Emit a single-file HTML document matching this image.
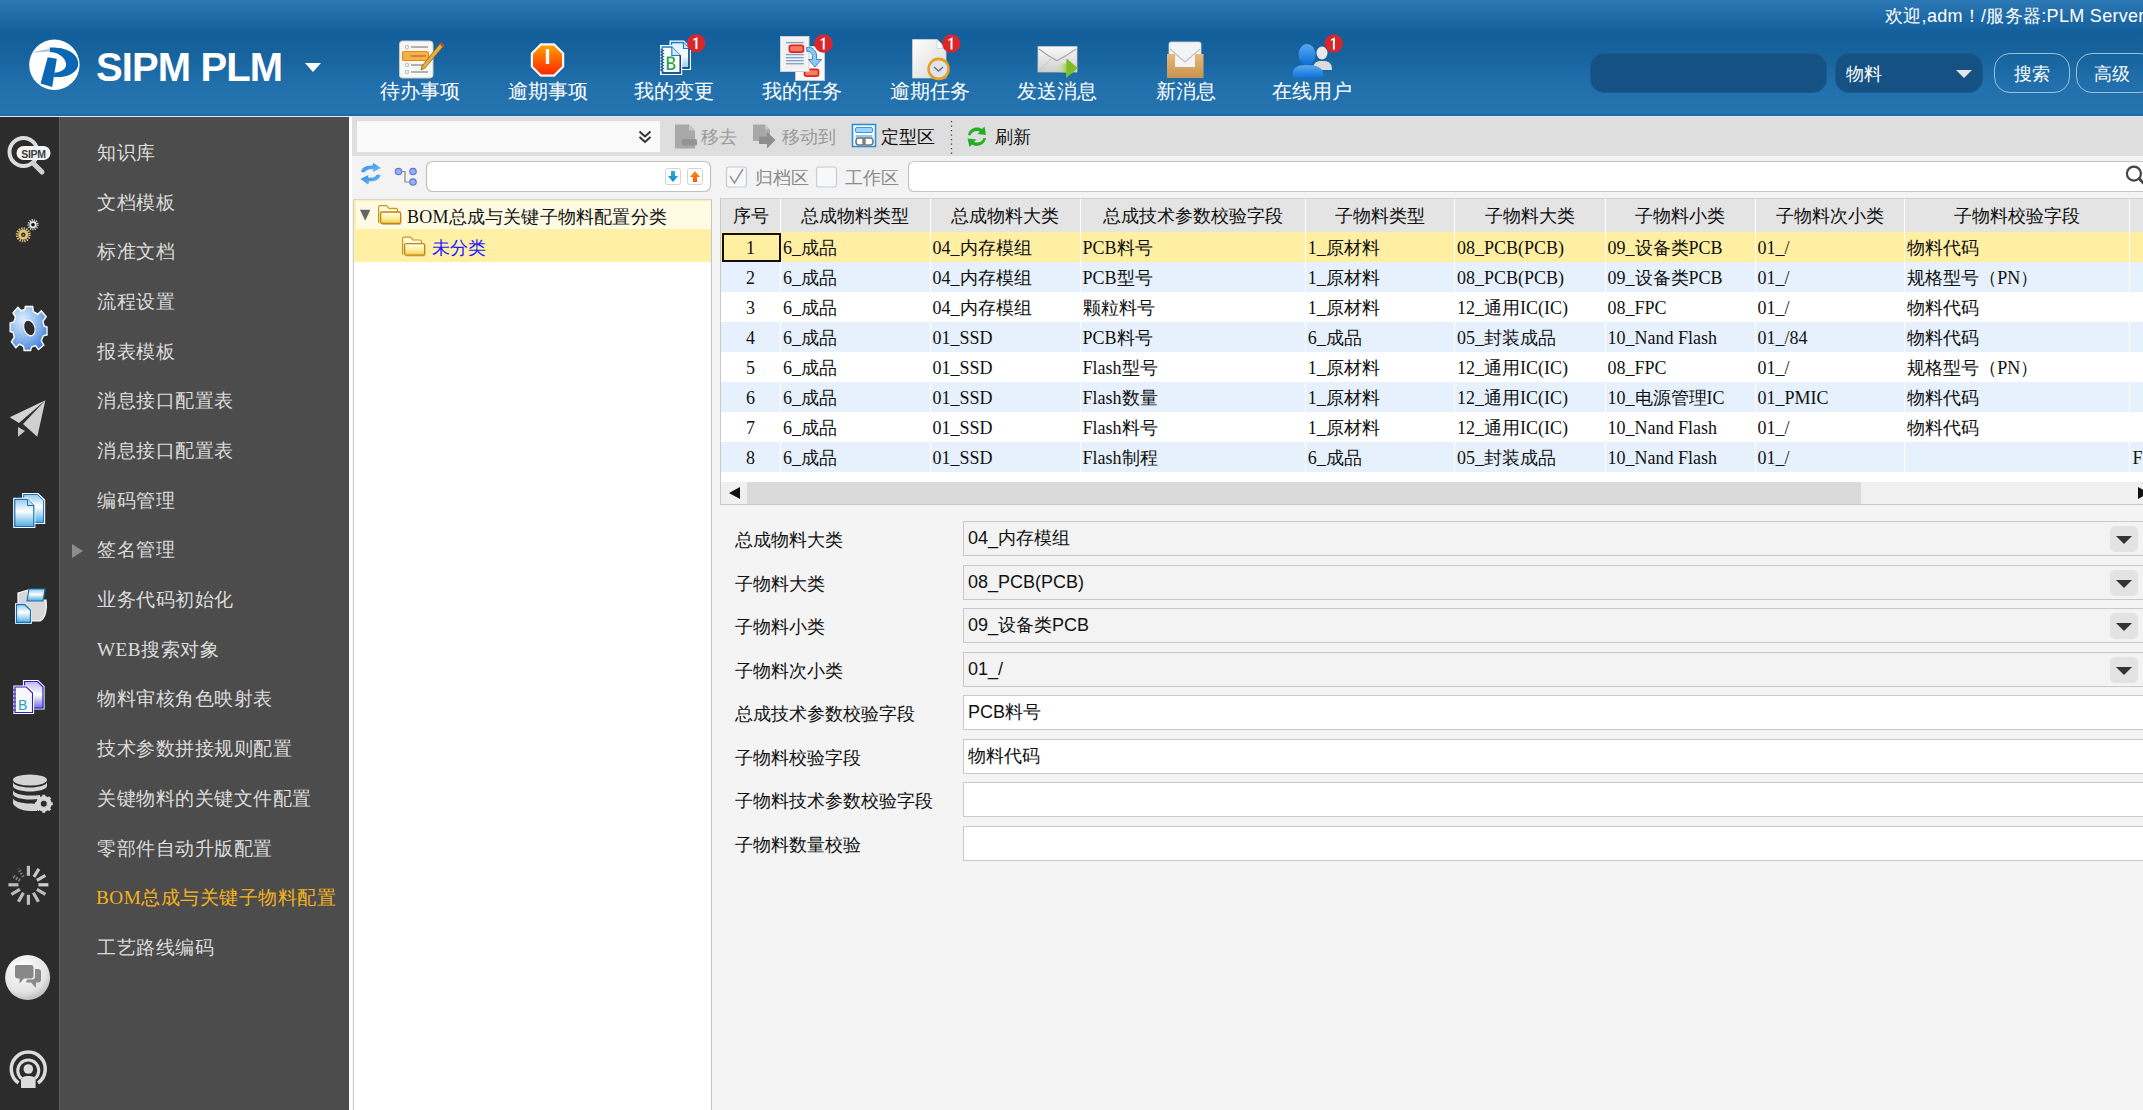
<!DOCTYPE html>
<html><head><meta charset="utf-8">
<style>
*{box-sizing:border-box;margin:0;padding:0}
html,body{width:2143px;height:1110px;overflow:hidden;background:#f4f4f4;font-family:"Liberation Sans",sans-serif}
.a{position:absolute}
#hdr{left:0;top:0;width:2143px;height:116px;background:linear-gradient(#2a78b4 0px,#1e6aa6 18px,#135f9b 33px,#16639e 55px,#2170ac 85px,#2574b0 113px,#1c6ba7 115px,#1c6ba7 116px)}
#hline{left:0;top:116px;width:2143px;height:1px;background:#e6e6e6}
.hl{top:80px;width:120px;text-align:center;color:#fff;font-size:19.5px;line-height:22px;white-space:nowrap;font-weight:300}
.tbt{top:125px;font-size:17.8px;line-height:24px;white-space:nowrap}
.nav{top:36px;width:110px;height:70px;text-align:center;color:#fff;font-size:19.5px}
.nav .lb{position:absolute;left:0;right:0;top:44px;line-height:22px;white-space:nowrap}
.nav svg{position:absolute;left:39px;top:4px}
#iconbar{left:0;top:117px;width:59px;height:993px;background:#2c2c2c}
#iconline{left:59px;top:117px;width:1px;height:993px;background:#5e5e5e}
#menu{left:60px;top:117px;width:289px;height:993px;background:#4c4c4c}
.mi{left:97px;color:#dcdcdc;font-size:19.2px;line-height:24px;white-space:nowrap;letter-spacing:0.5px}
.mi.sel{color:#f5b21e;left:96px}
#sep1{left:349px;top:117px;width:3px;height:993px;background:#fff}
#tb{left:352px;top:117px;width:1791px;height:39px;background:#dedede}
#row2{left:352px;top:156px;width:1791px;height:43px;background:#f3f3f3}
#tree{left:353px;top:199px;width:359px;height:911px;background:#fff;border-left:1px solid #cfcfcf;border-right:1px solid #c4c4c4;border-top:1px solid #d8d8d8}
#grid{left:720px;top:198px;width:1423px;height:307px;background:#fff;border-left:1px solid #c8c8c8;border-top:1px solid #d0d0d0;border-bottom:1px solid #c8c8c8}
.hc{top:0;height:33px;background:#e4e4e4;border-right:2px solid #fff;color:#111;font-size:17.6px;line-height:35px;text-align:center;white-space:nowrap;overflow:hidden}
.r{left:0;width:1423px;height:30px}
.c{top:0;height:30px;border-right:2px solid #fff;font-family:"Liberation Serif",serif;font-size:18px;line-height:32px;color:#111;white-space:nowrap;overflow:hidden;padding-left:2px}
.lbl{left:735px;font-size:18px;color:#111;line-height:22px;white-space:nowrap}
.fld{left:963px;width:1190px;height:35px;border:1px solid #c9c9c9;background:#f3f3f3;font-size:18px;line-height:33px;padding-left:4px;color:#111}
.fld.w{background:#fff}
.dd{position:absolute;left:1146px;top:4px;width:28px;height:26px;background:#e3e3e3;border-radius:5px}
.dd:after{content:"";position:absolute;left:6px;top:10px;border-left:8px solid transparent;border-right:8px solid transparent;border-top:8px solid #333}
</style></head><body>
<div id="hdr" class="a"></div>
<div id="hline" class="a"></div>
<!-- navicons -->
<svg class="a" style="left:0;top:0" width="1400" height="116" viewBox="0 0 1400 116">
<defs>
<linearGradient id="gOct" x1="0" y1="0" x2="0" y2="1"><stop offset="0" stop-color="#ffa000"/><stop offset="0.55" stop-color="#ff5a00"/><stop offset="1" stop-color="#ff2a00"/></linearGradient>
<linearGradient id="gPaper" x1="0" y1="0" x2="1" y2="1"><stop offset="0" stop-color="#ffffff"/><stop offset="1" stop-color="#d8d8d8"/></linearGradient>
<linearGradient id="gEnv" x1="0" y1="0" x2="0" y2="1"><stop offset="0" stop-color="#fafafa"/><stop offset="1" stop-color="#cfcfcf"/></linearGradient>
<linearGradient id="gTray" x1="0" y1="0" x2="0" y2="1"><stop offset="0" stop-color="#e8b878"/><stop offset="1" stop-color="#c99350"/></linearGradient>
<linearGradient id="gUser" x1="0" y1="0" x2="0" y2="1"><stop offset="0" stop-color="#5aa8f0"/><stop offset="1" stop-color="#0a6fd8"/></linearGradient>
<linearGradient id="gArrow" x1="0" y1="0" x2="1" y2="0"><stop offset="0" stop-color="#c8e890" stop-opacity="0"/><stop offset="0.5" stop-color="#98cc40"/><stop offset="1" stop-color="#a8d030"/></linearGradient>
<g id="badge"><circle r="9.2" fill="#d9262b"/><path d="M-2.8 -4 L1.2 -6.2 L1.2 6 L-0.8 6 L-0.8 -3.4 L-2.8 -2.4 Z" fill="#fff"/></g>
</defs>
<!-- 1 notepad -->
<rect x="399.5" y="41" width="33.5" height="37" rx="3" fill="#f7f7f5" stroke="#cfcabc" stroke-width="1"/>
<g fill="none" stroke="#c4c4c4" stroke-width="1.2"><circle cx="407" cy="47" r="1.7"/><circle cx="407" cy="56" r="1.7"/><circle cx="407" cy="65" r="1.7"/><circle cx="407" cy="72" r="1.7"/></g>
<g stroke="#9a9a9a" stroke-width="1.5"><line x1="411" y1="47" x2="428" y2="47"/><line x1="411" y1="65" x2="425" y2="65"/><line x1="411" y1="72" x2="428" y2="72"/></g>
<rect x="402.5" y="51.5" width="26" height="9" rx="2" fill="#f6b24a" stroke="#e88a10" stroke-width="1.2"/>
<line x1="411" y1="56" x2="426" y2="56" stroke="#b07020" stroke-width="1.3"/>
<path d="M441 42.5 L444 45.5 L425 68 L421 70 L422 66 Z" fill="#e8b040" stroke="#8a6010" stroke-width="0.8"/>
<path d="M441 42.5 L444 45.5 L442.5 47 L439.5 44 Z" fill="#e03030"/>
<!-- 2 octagon -->
<polygon points="540.5,43.5 554.5,43.5 564,53 564,67 554.5,76.5 540.5,76.5 531,67 531,53" fill="#fff" stroke="#e8e8e8" stroke-width="0.5"/>
<polygon points="541.3,45.5 553.7,45.5 562,53.8 562,66.2 553.7,74.5 541.3,74.5 533,66.2 533,53.8" fill="url(#gOct)"/>
<rect x="545.8" y="49" width="3.4" height="15" fill="#fff"/>
<!-- 3 my change -->
<linearGradient id="gChg" x1="0" y1="0" x2="0" y2="1"><stop offset="0" stop-color="#d8eefa"/><stop offset="0.5" stop-color="#ffffff"/><stop offset="1" stop-color="#8ccbec"/></linearGradient>
<path d="M669.5 40.5 L684 40.5 L691 47.5 L691 70 L669.5 70 Z" fill="#fff"/>
<path d="M671.5 42.5 L683.5 42.5 L689 48 L689 68 L671.5 68 Z" fill="url(#gChg)" stroke="#1a7cc4" stroke-width="1.3"/>
<path d="M683.5 42.5 L683.5 48.5 L689 48.5" fill="#c8e6f6" stroke="#1a7cc4" stroke-width="1.1"/>
<path d="M689 48 L689 68 L671.5 68" fill="none" stroke="#123e80" stroke-width="1.3"/>
<path d="M660 45 L672 45 L682.2 55 L682.2 75 L660 75 Z" fill="#fff"/>
<path d="M662.2 47 L671.8 47 L680.3 55.5 L680.3 73 L662.2 73 Z" fill="#fdfeff" stroke="#1a7cc4" stroke-width="1.3"/>
<path d="M671.8 47 L671.8 55.5 L680.3 55.5" fill="#cfe8f6" stroke="#1a7cc4" stroke-width="1.1"/>
<path d="M680.3 55.5 L680.3 73 L662.2 73" fill="none" stroke="#123e80" stroke-width="1.3"/>
<g stroke="#1a5fa0" stroke-width="1.1" fill="none"><path d="M660.5 49 L663.5 50.5 L660.5 52 L663.5 53.5 L660.5 55 L663.5 56.5 L660.5 58 L663.5 59.5 L660.5 61 L663.5 62.5 L660.5 64 L663.5 65.5 L660.5 67 L663.5 68.5 L660.5 70 L663.5 71.5"/></g>
<path d="M666.8 56.5 L671.5 56.5 C674 56.5 675 58 675 59.8 C675 61.5 674 62.6 672.5 63 C674.5 63.4 675.5 64.8 675.5 66.5 C675.5 68.8 674 70 671.5 70 L666.8 70 Z M668.8 58.3 L668.8 62.2 L671.3 62.2 C672.6 62.2 673.1 61.4 673.1 60.2 C673.1 59 672.5 58.3 671.3 58.3 Z M668.8 63.9 L668.8 68.2 L671.5 68.2 C672.9 68.2 673.5 67.4 673.5 66 C673.5 64.7 672.8 63.9 671.4 63.9 Z" fill="#2aa84a"/>
<use href="#badge" x="696.2" y="43.1"/>
<!-- 4 my task -->
<rect x="795.5" y="46.5" width="29" height="34" fill="#fbfbfb" stroke="#c8c8c8" stroke-width="1"/>
<rect x="804.5" y="69.3" width="14" height="6.8" rx="2" fill="#f08060" stroke="#e82020" stroke-width="1.7"/>
<rect x="780.5" y="36.5" width="28.5" height="35" fill="#f6f6f6" stroke="#d0d0d0" stroke-width="1"/>
<rect x="783" y="39" width="23.5" height="30" fill="#ececec" opacity="0.5"/>
<rect x="789.4" y="45.3" width="14" height="6.8" rx="2" fill="#f08060" stroke="#e82020" stroke-width="1.7"/>
<g stroke="#7f9fc8" stroke-width="1.3"><line x1="786" y1="42.6" x2="803.7" y2="42.6"/><line x1="786" y1="54.6" x2="803.7" y2="54.6"/><line x1="786" y1="57.7" x2="803.7" y2="57.7"/><line x1="786" y1="60.7" x2="803.7" y2="60.7"/><line x1="786" y1="63.7" x2="803.7" y2="63.7"/></g>
<path d="M806.5 47.5 C812 46.5 816 50 816.5 55 L816.5 59.5 L821.5 59.5 L815 67 L808.5 59.5 L812.5 59.5 L812.5 55.5 C812 52.5 809.5 51 807 51.5 Z" fill="#8cc8f0" stroke="#3a88d0" stroke-width="1"/>
<use href="#badge" x="823.5" y="43.5"/>
<!-- 5 overdue task -->
<path d="M912.5 39.5 L937 39.5 L946 48.5 L946 78 L912.5 78 Z" fill="url(#gPaper)" stroke="#d0d0d0" stroke-width="0.8"/>
<path d="M937 39.5 L937 48.5 L946 48.5" fill="#fff" stroke="#ccc" stroke-width="0.8"/>
<circle cx="938.6" cy="68.9" r="10" fill="#dfe3f0" stroke="#e8a020" stroke-width="2.6"/>
<path d="M934 67 L938.6 71 L943 67" fill="none" stroke="#707070" stroke-width="1.5"/>
<use href="#badge" x="951.3" y="43.5"/>
<!-- 6 send message -->
<rect x="1038" y="46.5" width="39" height="25.5" fill="url(#gEnv)" stroke="#c8c8c8" stroke-width="0.8"/>
<path d="M1039 49 Q1048 56 1057 60.8 Q1066 56 1076 49" fill="none" stroke="#a8a8a8" stroke-width="1.2"/>
<path d="M1039 70.5 L1051 59" fill="none" stroke="#c4c4c4" stroke-width="1"/>
<path d="M1057 63.8 L1066 63.8 L1066.5 58.4 L1077.7 68.1 L1066.5 77.8 L1066 72.4 L1057 72.4 Z" fill="url(#gArrow)"/>
<path d="M1066.5 58.4 L1077.7 68.1 L1066.5 77.8 Z" fill="#6ab020" opacity="0.6"/>
<!-- 7 new message -->
<rect x="1169" y="42" width="32" height="28" rx="2" fill="#f2f4f6" stroke="#d6d6d6" stroke-width="0.8"/>
<path d="M1170 49 L1185 62 L1200 49" fill="none" stroke="#c0c0c0" stroke-width="1.2"/>
<path d="M1167 54 L1175 54 L1175 67 L1195 67 L1195 54 L1203.5 54 L1203.5 78 L1167 78 Z" fill="url(#gTray)"/>
<!-- 8 online users -->
<ellipse cx="1322" cy="53" rx="5.5" ry="6.5" fill="#e8e8e8"/>
<path d="M1313 70 C1313 62 1317 61 1322 61 C1328 61 1332 62 1332 70 Z" fill="#dcdcdc"/>
<ellipse cx="1307" cy="54.5" rx="8.5" ry="10.5" fill="url(#gUser)"/>
<path d="M1292.5 77 C1292 68 1296 65 1307 65 C1319 65 1323.5 68 1323.5 77 C1315 79 1300 79 1292.5 77 Z" fill="url(#gUser)"/>
<use href="#badge" x="1333.7" y="43.4"/>
</svg>
<div class="a hl" style="left:360px">待办事项</div>
<div class="a hl" style="left:487.5px">逾期事项</div>
<div class="a hl" style="left:614px">我的变更</div>
<div class="a hl" style="left:742px">我的任务</div>
<div class="a hl" style="left:870px">逾期任务</div>
<div class="a hl" style="left:997px">发送消息</div>
<div class="a hl" style="left:1125.5px">新消息</div>
<div class="a hl" style="left:1252px">在线用户</div>
<!-- hright -->
<div class="a" style="left:1885px;top:4px;color:#fff;font-size:18px;line-height:24px;white-space:nowrap;letter-spacing:0.3px">欢迎,adm！/服务器:PLM Server</div>
<div class="a" style="left:1590px;top:53px;width:237px;height:40px;border-radius:14px;background:#155283;border:1px solid #1a5a8e"></div>
<div class="a" style="left:1835px;top:53px;width:148px;height:40px;border-radius:14px;background:#155283;border:1px solid #1a5a8e"></div>
<div class="a" style="left:1846px;top:63px;color:#fff;font-size:18px;line-height:22px">物料</div>
<div class="a" style="left:1956px;top:70px;width:0;height:0;border-left:8px solid transparent;border-right:8px solid transparent;border-top:8px solid #e6e6e6"></div>
<div class="a" style="left:1994px;top:53px;width:76px;height:40px;border-radius:16px;border:1.5px solid #9cc0dc;color:#fff;font-size:18px;line-height:40px;text-align:center">搜索</div>
<div class="a" style="left:2076px;top:53px;width:80px;height:40px;border-radius:16px;border:1.5px solid #9cc0dc;color:#fff;font-size:18px;line-height:40px;text-indent:17px">高级</div>
<!-- logo -->
<svg class="a" style="left:26px;top:37px" width="56" height="56" viewBox="0 0 56 56">
<circle cx="28.4" cy="27.8" r="25.2" fill="#fff"/>
<path d="M23.7 10.6 C30 10.4 38 10.8 45 15 C51 19 53 24 52 29 C50.5 35 44 39 35.3 39.9 L28 39.9 L28.3 35.8 C33 35.5 38 33.5 39.6 30 C41 26 39 21 33 17.5 C30 15.8 26 15.1 23.7 15.1 Z" fill="#0a67b3"/>
<path d="M21.7 20.2 L30.8 21.7 L26.2 50 L14.6 46.4 Z" fill="#0a67b3"/>
<path d="M9 14.5 L23 12 L23 14.6 L9 15.5 Z" fill="#6c9fcf" opacity="0.6"/>
</svg>
<div class="a" style="left:96px;top:43px;color:#fff;font-weight:bold;font-size:40px;line-height:48px;letter-spacing:-0.9px;white-space:nowrap">SIPM PLM</div>
<div class="a" style="left:305px;top:63px;width:0;height:0;border-left:8px solid transparent;border-right:8px solid transparent;border-top:9px solid #fff"></div>

<div id="iconbar" class="a"></div>
<div id="iconline" class="a"></div>
<div id="menu" class="a"></div>
<div id="sep1" class="a"></div>
<!-- sideicons -->
<svg class="a" style="left:0;top:117px" width="59" height="993" viewBox="0 117 59 993">
<defs>
<radialGradient id="gGear" cx="0.35" cy="0.3" r="0.8"><stop offset="0" stop-color="#dfeeff"/><stop offset="0.6" stop-color="#7fb0ea"/><stop offset="1" stop-color="#3a7ad8"/></radialGradient>
<linearGradient id="gDoc" x1="0" y1="0" x2="0" y2="1"><stop offset="0" stop-color="#8cc8ee"/><stop offset="0.45" stop-color="#ffffff"/><stop offset="1" stop-color="#40a8e0"/></linearGradient>
<linearGradient id="gDocP" x1="0" y1="0" x2="0" y2="1"><stop offset="0" stop-color="#b8b0f0"/><stop offset="0.5" stop-color="#ffffff"/><stop offset="1" stop-color="#6a60e0"/></linearGradient>
<radialGradient id="gBall" cx="0.4" cy="0.3" r="0.75"><stop offset="0" stop-color="#ffffff"/><stop offset="0.7" stop-color="#e4e4e4"/><stop offset="1" stop-color="#b8b8b8"/></radialGradient>
</defs>
<!-- search SIPM -->
<circle cx="23.5" cy="152" r="14" fill="none" stroke="#dcdcdc" stroke-width="4"/>
<line x1="33" y1="163" x2="42" y2="172" stroke="#d0d0d0" stroke-width="5" stroke-linecap="round"/>
<rect x="16.5" y="146" width="34" height="14" rx="7" fill="#f4f4f4"/>
<text x="33.5" y="157.5" font-family="Liberation Sans" font-size="10.5" font-weight="bold" fill="#3c3c3c" text-anchor="middle" letter-spacing="-0.3">SIPM</text>
<!-- small gears -->
<circle cx="23.3" cy="234.8" r="6.2" fill="none" stroke="#dcc070" stroke-width="2.6" stroke-dasharray="1.3 1.1"/>
<circle cx="23.3" cy="234.8" r="5" fill="#e2c274"/>
<circle cx="23.3" cy="234.8" r="2.2" fill="#2c2c2c"/><circle cx="23.3" cy="234.8" r="0.9" fill="#999"/>
<circle cx="33" cy="224.7" r="4.6" fill="none" stroke="#d8d8d8" stroke-width="2" stroke-dasharray="1.1 1.1"/>
<circle cx="33" cy="224.7" r="3.6" fill="#e0e0e0"/>
<circle cx="33" cy="224.7" r="1.8" fill="#111"/>
<!-- blue gear -->
<g transform="translate(29 327) scale(0.82 0.98)">
<path d="M-4.5 -21 L4.5 -21 L5.5 -15.5 L10.5 -13 L15 -16.5 L21 -10.5 L17 -6 L18.5 -1 L22 0 L22 8 L17.5 9 L15 14 L18 18.5 L11.5 23 L8 19 L3 20.5 L2 24 L-6 24 L-6.5 20 L-11.5 17.5 L-16 21 L-21.5 15 L-18 10.5 L-19.5 5.5 L-23 4.5 L-23 -4 L-18.5 -5 L-16.5 -10 L-19.5 -14.5 L-13.5 -20 L-9.5 -16.5 L-5 -18 Z" fill="url(#gGear)" stroke="#fff" stroke-width="1.6"/>
<ellipse cx="0" cy="1" rx="6.5" ry="8.5" transform="rotate(-30)" fill="#2c2c2c" stroke="#f0f0f0" stroke-width="1.5"/>
</g>
<!-- paper plane -->
<path d="M45.4 400.3 L9.7 417.3 L19 423 Z" fill="#d4d4d4"/>
<path d="M45.4 400.3 L23 424 L37.3 436.7 Z" fill="#cfcfcf"/>
<path d="M18 427 L18 436.7 L25 431 Z" fill="#c8c8c8"/>
<!-- docs blue -->
<path d="M22.7 493.5 L38 493.5 L44.6 500 L44.6 523.4 L22.7 523.4 Z" fill="url(#gDoc)" stroke="#fff" stroke-width="1.2"/>
<path d="M23.7 494.5 L37.5 494.5 L43.6 500.5 L43.6 522.4 L23.7 522.4 Z" fill="none" stroke="#1b6fb8" stroke-width="1"/>
<path d="M13.8 498.3 L28 498.3 L34.8 505 L34.8 527.5 L13.8 527.5 Z" fill="url(#gDoc)" stroke="#fff" stroke-width="1.2"/>
<path d="M14.8 499.3 L27.5 499.3 L33.8 505.5 L33.8 526.5 L14.8 526.5 Z" fill="none" stroke="#1b6fb8" stroke-width="1.2"/>
<path d="M27.5 499.3 L27.5 505.5 L33.8 505.5" fill="#bfe0f4" stroke="#1b6fb8" stroke-width="1"/>
<!-- printer docs -->
<path d="M18 593 L28 590 L28 600 L46 600 C47 608 46 618 40 621 L24 621 L18 612 Z" fill="#d8d8d8" stroke="#fff" stroke-width="1.2"/>
<path d="M29 589 L45 589 L43 601 L27 601 Z" fill="url(#gDoc)" stroke="#1b6fb8" stroke-width="1.2"/>
<path d="M15.5 603.5 L25 603.5 L31.5 609.5 L31.5 623.5 L15.5 623.5 Z" fill="url(#gDoc)" stroke="#fff" stroke-width="1"/>
<path d="M16.5 604.5 L24.5 604.5 L30.5 610 L30.5 622.5 L16.5 622.5 Z" fill="none" stroke="#1b6fb8" stroke-width="1.3"/>
<!-- B docs purple -->
<path d="M23.5 680.5 L38 680.5 L44 686.5 L44 709 L23.5 709 Z" fill="url(#gDocP)" stroke="#fff" stroke-width="1.2"/>
<path d="M24.5 681.5 L37.5 681.5 L43 687 L43 708 L24.5 708 Z" fill="none" stroke="#3020c0" stroke-width="1.2"/>
<path d="M14 686 L27 686 L33.5 692.5 L33.5 713.5 L14 713.5 Z" fill="#f8f8ff" stroke="#fff" stroke-width="1.2"/>
<path d="M15 687 L26.5 687 L32.5 693 L32.5 712.5 L15 712.5 Z" fill="none" stroke="#3020c0" stroke-width="1.1"/>
<g stroke="#3020c0" stroke-width="1"><line x1="13" y1="690" x2="16" y2="690"/><line x1="13" y1="694" x2="16" y2="694"/><line x1="13" y1="698" x2="16" y2="698"/><line x1="13" y1="702" x2="16" y2="702"/><line x1="13" y1="706" x2="16" y2="706"/><line x1="13" y1="710" x2="16" y2="710"/></g>
<text x="18" y="710" font-family="Liberation Sans" font-size="14" fill="#2aa0c0">B</text>
<!-- database -->
<g fill="#d4d4d4">
<ellipse cx="30" cy="780" rx="17" ry="5.5"/>
<path d="M13 782 L13 786 C13 789 21 791.5 30 791.5 C39 791.5 47 789 47 786 L47 782 C47 785 39 787.5 30 787.5 C21 787.5 13 785 13 782 Z"/>
<path d="M13 790 L13 794 C13 797 21 799.5 30 799.5 C36 799.5 40 798.5 40 798.5 L40 795 C37 795.5 34 795.5 30 795.5 C21 795.5 13 793 13 790 Z"/>
<path d="M13 798 L13 803 C13 806 21 811 30 811 L37 811 L37 804 C35 804 32 803.5 30 803.5 C21 803.5 13 801 13 798 Z"/>
</g>
<g transform="translate(43.8 803.8)"><circle r="6" fill="none" stroke="#d8d8d8" stroke-width="3.5"/>
<g stroke="#d8d8d8" stroke-width="3"><line x1="0" y1="-9" x2="0" y2="9"/><line x1="-9" y1="0" x2="9" y2="0"/><line x1="-6.4" y1="-6.4" x2="6.4" y2="6.4"/><line x1="6.4" y1="-6.4" x2="-6.4" y2="6.4"/></g>
<circle r="3" fill="#2c2c2c"/></g>
<!-- spinner -->
<g transform="translate(28.4 884.8)" stroke="#bdbdbd" stroke-width="3.2" stroke-linecap="butt">
<line x1="0" y1="-9" x2="0" y2="-19"/>
<line x1="5.5" y1="-8" x2="10.5" y2="-16" stroke="#c8c8c8"/>
<line x1="8.5" y1="-4.5" x2="17" y2="-9.5" stroke="#c8c8c8"/>
<line x1="10" y1="0" x2="20" y2="0" stroke="#d0d0d0"/>
<line x1="8.5" y1="4.5" x2="17" y2="9.5"/>
<line x1="5" y1="8" x2="10" y2="17"/>
<line x1="0" y1="10" x2="0" y2="20"/>
<line x1="-5" y1="8" x2="-10" y2="17"/>
<line x1="-8.5" y1="4.5" x2="-17" y2="9.5"/>
<line x1="-10" y1="0" x2="-20" y2="0"/>
<line x1="-8.5" y1="-4.5" x2="-16" y2="-9" stroke="#888" stroke-dasharray="1.5 1.5"/>
<line x1="-5" y1="-8" x2="-10" y2="-16" stroke="#777" stroke-dasharray="1.5 1.5"/>
</g>
<!-- chat ball -->
<circle cx="27.6" cy="977.5" r="22.5" fill="url(#gBall)"/>
<path d="M15 967 C15 965.5 16 965 17.5 965 L31 965 C32.5 965 33.5 966 33.5 967.5 L33.5 976 C33.5 977.5 32.5 978.5 31 978.5 L24 978.5 L19.5 983.5 L19.5 978.5 L17.5 978.5 C16 978.5 15 977.5 15 976 Z" fill="#888"/>
<path d="M35 969 L38 969 C40 969 41 970 41 972 L41 980 C41 981.5 40 982.5 38.5 982.5 L36 982.5 L36 988 L31 982.5 L26 982.5 L27 979.5 L32 979.5 C34 979.5 35 978.5 35 976.5 Z" fill="#8a8a8a"/>
<!-- podcast -->
<g fill="none" stroke="#dcdcdc">
<path d="M18.5 1083 A17 17 0 1 1 38 1083" stroke-width="3.5"/>
<path d="M21.5 1078.5 A10.5 10.5 0 1 1 35 1078.5" stroke-width="3"/>
</g>
<circle cx="28.3" cy="1069" r="4.8" fill="#dcdcdc"/>
<path d="M21 1088 L21 1080 C21 1077 24 1076 28.3 1076 C32.6 1076 35.6 1077 35.6 1080 L35.6 1088 Z" fill="#dcdcdc"/>
</svg>
<!-- menu -->
<div class="a mi" style="top:140.8px">知识库</div>
<div class="a mi" style="top:190.5px">文档模板</div>
<div class="a mi" style="top:240.2px">标准文档</div>
<div class="a mi" style="top:289.9px">流程设置</div>
<div class="a mi" style="top:339.6px">报表模板</div>
<div class="a mi" style="top:389.2px">消息接口配置表</div>
<div class="a mi" style="top:438.9px">消息接口配置表</div>
<div class="a mi" style="top:488.6px">编码管理</div>
<div class="a mi" style="top:538.3px">签名管理</div>
<div class="a mi" style="top:588.0px">业务代码初始化</div>
<div class="a mi" style="top:637.7px"><span style="font-family:'Liberation Serif',serif">WEB</span>搜索对象</div>
<div class="a mi" style="top:687.4px">物料审核角色映射表</div>
<div class="a mi" style="top:737.1px">技术参数拼接规则配置</div>
<div class="a mi" style="top:786.8px">关键物料的关键文件配置</div>
<div class="a mi" style="top:836.5px">零部件自动升版配置</div>
<div class="a mi sel" style="top:886.1px"><span style="font-family:'Liberation Serif',serif">BOM</span>总成与关键子物料配置</div>
<div class="a mi" style="top:935.8px">工艺路线编码</div>
<div class="a" style="left:72px;top:543.5px;width:0;height:0;border-top:7px solid transparent;border-bottom:7px solid transparent;border-left:11px solid #8c8c8c"></div>

<div id="tb" class="a"></div>
<div id="row2" class="a"></div>
<!-- toolbar -->
<div class="a" style="left:357px;top:121px;width:303px;height:31px;background:#f9f9f9"></div>
<svg class="a" style="left:0;top:0" width="2143" height="200" viewBox="0 0 2143 200">
<defs>
<linearGradient id="gDn" x1="0" y1="0" x2="0" y2="1"><stop offset="0" stop-color="#30b0e8"/><stop offset="1" stop-color="#0a88c8"/></linearGradient>
<linearGradient id="gUp" x1="0" y1="0" x2="0" y2="1"><stop offset="0" stop-color="#ff8a20"/><stop offset="1" stop-color="#ff5a00"/></linearGradient>
<linearGradient id="gRef" x1="0" y1="0" x2="1" y2="1"><stop offset="0" stop-color="#2f7fe0"/><stop offset="1" stop-color="#70c8f8"/></linearGradient>
</defs>
<!-- double chevron -->
<path d="M639.5 131.5 L645 136.5 L650.5 131.5 M639.5 137 L645 142 L650.5 137" fill="none" stroke="#333" stroke-width="2"/>
<!-- remove doc icon -->
<path d="M675 124.5 L689 124.5 L695 130.5 L695 148.5 L675 148.5 Z" fill="#a8a8a8"/>
<path d="M689 124.5 L689 130.5 L695 130.5 Z" fill="#c6c6c6"/>
<rect x="682" y="139" width="15" height="6.5" rx="1.5" fill="#949494"/>
<!-- move to icon -->
<path d="M753 124.5 L765 124.5 L770 129.5 L770 141 L753 141 Z" fill="#a8a8a8"/>
<path d="M765 124.5 L765 129.5 L770 129.5 Z" fill="#c6c6c6"/>
<path d="M759 136.5 L767 136.5 L767 132 L775.5 140 L767 148.5 L767 144 L759 144 Z" fill="#8e8e8e"/>
<!-- freeze icon -->
<rect x="852.5" y="124.5" width="23" height="22" fill="#fff" stroke="#2b8fd8" stroke-width="1.6"/>
<rect x="855.5" y="127.5" width="17" height="5" rx="1.5" fill="#9fd4fb" stroke="#3a9ae0" stroke-width="1"/>
<rect x="855.5" y="135" width="17" height="3" fill="#4aa0e0" opacity="0.6"/>
<rect x="856" y="138" width="9" height="7" rx="3" fill="none" stroke="#777" stroke-width="1.6"/>
<rect x="863" y="138" width="10" height="7" rx="3" fill="none" stroke="#777" stroke-width="1.6"/>
<!-- dotted sep -->
<line x1="951.5" y1="121" x2="951.5" y2="154" stroke="#444" stroke-width="1.3" stroke-dasharray="1.3 3.2"/>
<!-- refresh green -->
<path d="M968 135 C969 129 975 126.5 980 128 L982 129 L984.5 126.5 L986 135 L977.5 134 L980 131.5 C976 130 971.5 131.5 970.5 135.5 Z" fill="#22b022"/>
<path d="M986 138 C985 144 979 147 974 145.5 L972 144.5 L969.5 147 L967.5 138.5 L976.5 139.5 L974 142 C978 143.5 982.5 142 983.5 138 Z" fill="#22b022"/>
<!-- row2 sync icon -->
<path d="M361 172 C362 167 367 165 372 166 L373.5 163 L381 168 L373 172 L373.5 169.5 C369 168.5 366 170 364.5 172.5 Z" fill="url(#gRef)"/>
<path d="M380.5 175 C379.5 180 374.5 182 369.5 181 L368 184.5 L360.5 179 L368.5 175 L368 177.5 C372.5 178.5 375.5 177 377 174.5 Z" fill="url(#gRef)"/>
<!-- tree icon -->
<g fill="#9ab0f0" stroke="#5a78d8" stroke-width="1.2"><circle cx="398.5" cy="171.5" r="3.2"/><circle cx="413" cy="171.5" r="3.2"/><circle cx="413" cy="182" r="3.2"/></g>
<path d="M402 171.5 L405 171.5 L405 182 L409.5 182" fill="none" stroke="#888" stroke-width="1.2"/>
<!-- search input -->
<rect x="426.5" y="161.5" width="284" height="30" rx="6" fill="#fff" stroke="#c2c2c2" stroke-width="1.2"/>
<rect x="665.5" y="168.5" width="15" height="16" rx="2" fill="#fff" stroke="#d4d4d4" stroke-width="1"/>
<path d="M671 171 L675 171 L675 176 L678 176 L673 182 L668 176 L671 176 Z" fill="url(#gDn)"/>
<rect x="687.5" y="168.5" width="15" height="16" rx="2" fill="#fff" stroke="#d4d4d4" stroke-width="1"/>
<path d="M695 171 L700 177 L697 177 L697 182 L693 182 L693 177 L690 177 Z" fill="url(#gUp)"/>
<!-- checkboxes -->
<rect x="726.5" y="167" width="20" height="20" rx="2.5" fill="#f8f8f8" stroke="#c4ccd8" stroke-width="1.2"/>
<path d="M730 176 L734.5 183 L743 169" fill="none" stroke="#9a9a9a" stroke-width="1.6"/>
<rect x="816.5" y="167" width="20" height="20" rx="2.5" fill="#f8f8f8" stroke="#c4ccd8" stroke-width="1.2"/>
<!-- long input -->
<path d="M2143 161.5 L914.5 161.5 Q908.5 161.5 908.5 167.5 L908.5 185.5 Q908.5 191.5 914.5 191.5 L2143 191.5" fill="#fff" stroke="#c4c4c4" stroke-width="1.2"/>
<circle cx="2133.9" cy="173.6" r="7" fill="none" stroke="#444" stroke-width="2.2"/>
<line x1="2139" y1="178.5" x2="2144" y2="183.5" stroke="#444" stroke-width="3"/>
</svg>
<div class="a tbt" style="left:701px;color:#9a9a9a">移去</div>
<div class="a tbt" style="left:782px;color:#9a9a9a">移动到</div>
<div class="a tbt" style="left:881px;color:#111">定型区</div>
<div class="a tbt" style="left:995px;color:#111">刷新</div>
<div class="a tbt" style="left:755px;top:166px;color:#8a8a8a">归档区</div>
<div class="a tbt" style="left:845px;top:166px;color:#8a8a8a">工作区</div>
<div id="tree" class="a"></div>
<div id="grid" class="a"></div>
<!-- gridcontent -->
<div class="a" style="left:721px;top:199px;width:1422px;height:283px;overflow:hidden">
<div class="a hc" style="left:0.0px;width:61.0px">序号</div>
<div class="a hc" style="left:60.0px;width:150.5px">总成物料类型</div>
<div class="a hc" style="left:209.5px;width:151.1px">总成物料大类</div>
<div class="a hc" style="left:359.6px;width:226.1px">总成技术参数校验字段</div>
<div class="a hc" style="left:584.7px;width:150.3px">子物料类型</div>
<div class="a hc" style="left:734.0px;width:151.5px">子物料大类</div>
<div class="a hc" style="left:884.5px;width:151.0px">子物料小类</div>
<div class="a hc" style="left:1034.5px;width:150.8px">子物料次小类</div>
<div class="a hc" style="left:1184.3px;width:226.1px">子物料校验字段</div>
<div class="a hc" style="left:1409.4px;width:170.6px"></div>
<div class="a r" style="top:33px">
<div class="a c" style="left:0.0px;width:61.0px;background:#ffefa2;text-align:center;padding-left:0;">1</div><div class="a c" style="left:60.0px;width:150.5px;background:#ffefa2;">6_成品</div><div class="a c" style="left:209.5px;width:151.1px;background:#ffefa2;">04_内存模组</div><div class="a c" style="left:359.6px;width:226.1px;background:#ffefa2;">PCB料号</div><div class="a c" style="left:584.7px;width:150.3px;background:#ffefa2;">1_原材料</div><div class="a c" style="left:734.0px;width:151.5px;background:#ffefa2;">08_PCB(PCB)</div><div class="a c" style="left:884.5px;width:151.0px;background:#ffefa2;">09_设备类PCB</div><div class="a c" style="left:1034.5px;width:150.8px;background:#ffefa2;">01_/</div><div class="a c" style="left:1184.3px;width:226.1px;background:#ffefa2;">物料代码</div><div class="a c" style="left:1409.4px;width:170.6px;background:#ffefa2;"></div>
</div>
<div class="a r" style="top:63px">
<div class="a c" style="left:0.0px;width:61.0px;background:#e7f1fd;text-align:center;padding-left:0;">2</div><div class="a c" style="left:60.0px;width:150.5px;background:#e7f1fd;">6_成品</div><div class="a c" style="left:209.5px;width:151.1px;background:#e7f1fd;">04_内存模组</div><div class="a c" style="left:359.6px;width:226.1px;background:#e7f1fd;">PCB型号</div><div class="a c" style="left:584.7px;width:150.3px;background:#e7f1fd;">1_原材料</div><div class="a c" style="left:734.0px;width:151.5px;background:#e7f1fd;">08_PCB(PCB)</div><div class="a c" style="left:884.5px;width:151.0px;background:#e7f1fd;">09_设备类PCB</div><div class="a c" style="left:1034.5px;width:150.8px;background:#e7f1fd;">01_/</div><div class="a c" style="left:1184.3px;width:226.1px;background:#e7f1fd;">规格型号（PN）</div><div class="a c" style="left:1409.4px;width:170.6px;background:#e7f1fd;"></div>
</div>
<div class="a r" style="top:93px">
<div class="a c" style="left:0.0px;width:61.0px;background:#ffffff;text-align:center;padding-left:0;">3</div><div class="a c" style="left:60.0px;width:150.5px;background:#ffffff;">6_成品</div><div class="a c" style="left:209.5px;width:151.1px;background:#ffffff;">04_内存模组</div><div class="a c" style="left:359.6px;width:226.1px;background:#ffffff;">颗粒料号</div><div class="a c" style="left:584.7px;width:150.3px;background:#ffffff;">1_原材料</div><div class="a c" style="left:734.0px;width:151.5px;background:#ffffff;">12_通用IC(IC)</div><div class="a c" style="left:884.5px;width:151.0px;background:#ffffff;">08_FPC</div><div class="a c" style="left:1034.5px;width:150.8px;background:#ffffff;">01_/</div><div class="a c" style="left:1184.3px;width:226.1px;background:#ffffff;">物料代码</div><div class="a c" style="left:1409.4px;width:170.6px;background:#ffffff;"></div>
</div>
<div class="a r" style="top:123px">
<div class="a c" style="left:0.0px;width:61.0px;background:#e7f1fd;text-align:center;padding-left:0;">4</div><div class="a c" style="left:60.0px;width:150.5px;background:#e7f1fd;">6_成品</div><div class="a c" style="left:209.5px;width:151.1px;background:#e7f1fd;">01_SSD</div><div class="a c" style="left:359.6px;width:226.1px;background:#e7f1fd;">PCB料号</div><div class="a c" style="left:584.7px;width:150.3px;background:#e7f1fd;">6_成品</div><div class="a c" style="left:734.0px;width:151.5px;background:#e7f1fd;">05_封装成品</div><div class="a c" style="left:884.5px;width:151.0px;background:#e7f1fd;">10_Nand Flash</div><div class="a c" style="left:1034.5px;width:150.8px;background:#e7f1fd;">01_/84</div><div class="a c" style="left:1184.3px;width:226.1px;background:#e7f1fd;">物料代码</div><div class="a c" style="left:1409.4px;width:170.6px;background:#e7f1fd;"></div>
</div>
<div class="a r" style="top:153px">
<div class="a c" style="left:0.0px;width:61.0px;background:#ffffff;text-align:center;padding-left:0;">5</div><div class="a c" style="left:60.0px;width:150.5px;background:#ffffff;">6_成品</div><div class="a c" style="left:209.5px;width:151.1px;background:#ffffff;">01_SSD</div><div class="a c" style="left:359.6px;width:226.1px;background:#ffffff;">Flash型号</div><div class="a c" style="left:584.7px;width:150.3px;background:#ffffff;">1_原材料</div><div class="a c" style="left:734.0px;width:151.5px;background:#ffffff;">12_通用IC(IC)</div><div class="a c" style="left:884.5px;width:151.0px;background:#ffffff;">08_FPC</div><div class="a c" style="left:1034.5px;width:150.8px;background:#ffffff;">01_/</div><div class="a c" style="left:1184.3px;width:226.1px;background:#ffffff;">规格型号（PN）</div><div class="a c" style="left:1409.4px;width:170.6px;background:#ffffff;"></div>
</div>
<div class="a r" style="top:183px">
<div class="a c" style="left:0.0px;width:61.0px;background:#e7f1fd;text-align:center;padding-left:0;">6</div><div class="a c" style="left:60.0px;width:150.5px;background:#e7f1fd;">6_成品</div><div class="a c" style="left:209.5px;width:151.1px;background:#e7f1fd;">01_SSD</div><div class="a c" style="left:359.6px;width:226.1px;background:#e7f1fd;">Flash数量</div><div class="a c" style="left:584.7px;width:150.3px;background:#e7f1fd;">1_原材料</div><div class="a c" style="left:734.0px;width:151.5px;background:#e7f1fd;">12_通用IC(IC)</div><div class="a c" style="left:884.5px;width:151.0px;background:#e7f1fd;">10_电源管理IC</div><div class="a c" style="left:1034.5px;width:150.8px;background:#e7f1fd;">01_PMIC</div><div class="a c" style="left:1184.3px;width:226.1px;background:#e7f1fd;">物料代码</div><div class="a c" style="left:1409.4px;width:170.6px;background:#e7f1fd;"></div>
</div>
<div class="a r" style="top:213px">
<div class="a c" style="left:0.0px;width:61.0px;background:#ffffff;text-align:center;padding-left:0;">7</div><div class="a c" style="left:60.0px;width:150.5px;background:#ffffff;">6_成品</div><div class="a c" style="left:209.5px;width:151.1px;background:#ffffff;">01_SSD</div><div class="a c" style="left:359.6px;width:226.1px;background:#ffffff;">Flash料号</div><div class="a c" style="left:584.7px;width:150.3px;background:#ffffff;">1_原材料</div><div class="a c" style="left:734.0px;width:151.5px;background:#ffffff;">12_通用IC(IC)</div><div class="a c" style="left:884.5px;width:151.0px;background:#ffffff;">10_Nand Flash</div><div class="a c" style="left:1034.5px;width:150.8px;background:#ffffff;">01_/</div><div class="a c" style="left:1184.3px;width:226.1px;background:#ffffff;">物料代码</div><div class="a c" style="left:1409.4px;width:170.6px;background:#ffffff;"></div>
</div>
<div class="a r" style="top:243px">
<div class="a c" style="left:0.0px;width:61.0px;background:#e7f1fd;text-align:center;padding-left:0;">8</div><div class="a c" style="left:60.0px;width:150.5px;background:#e7f1fd;">6_成品</div><div class="a c" style="left:209.5px;width:151.1px;background:#e7f1fd;">01_SSD</div><div class="a c" style="left:359.6px;width:226.1px;background:#e7f1fd;">Flash制程</div><div class="a c" style="left:584.7px;width:150.3px;background:#e7f1fd;">6_成品</div><div class="a c" style="left:734.0px;width:151.5px;background:#e7f1fd;">05_封装成品</div><div class="a c" style="left:884.5px;width:151.0px;background:#e7f1fd;">10_Nand Flash</div><div class="a c" style="left:1034.5px;width:150.8px;background:#e7f1fd;">01_/</div><div class="a c" style="left:1184.3px;width:226.1px;background:#e7f1fd;"></div><div class="a c" style="left:1409.4px;width:170.6px;background:#e7f1fd;">F</div>
</div>
<div class="a" style="left:1px;top:33.5px;width:58.5px;height:29.5px;border:2px solid #111"></div>
</div>
<div class="a" style="left:721px;top:482px;width:1422px;height:22px;background:#f0f0f0"></div>
<div class="a" style="left:747px;top:482px;width:1114px;height:22px;background:#dadada"></div>
<div class="a" style="left:729px;top:487px;width:0;height:0;border-top:6px solid transparent;border-bottom:6px solid transparent;border-right:11px solid #111"></div>
<div class="a" style="left:2138px;top:487px;width:0;height:0;border-top:6px solid transparent;border-bottom:6px solid transparent;border-left:11px solid #111"></div>
<!-- form -->
<div class="a lbl" style="top:529.0px">总成物料大类</div>
<div class="a fld" style="top:521.0px">04_内存模组<div class="dd"></div></div>
<div class="a lbl" style="top:572.5px">子物料大类</div>
<div class="a fld" style="top:564.5px">08_PCB(PCB)<div class="dd"></div></div>
<div class="a lbl" style="top:616.0px">子物料小类</div>
<div class="a fld" style="top:608.0px">09_设备类PCB<div class="dd"></div></div>
<div class="a lbl" style="top:659.6px">子物料次小类</div>
<div class="a fld" style="top:651.6px">01_/<div class="dd"></div></div>
<div class="a lbl" style="top:703.2px">总成技术参数校验字段</div>
<div class="a fld w" style="top:695.2px">PCB料号</div>
<div class="a lbl" style="top:746.8px">子物料校验字段</div>
<div class="a fld w" style="top:738.8px">物料代码</div>
<div class="a lbl" style="top:790.4px">子物料技术参数校验字段</div>
<div class="a fld w" style="top:782.4px"></div>
<div class="a lbl" style="top:834.0px">子物料数量校验</div>
<div class="a fld w" style="top:826.0px"></div>
<!-- treecontent -->
<div class="a" style="left:354px;top:199.5px;width:357px;height:29.5px;background:#fffbe3;border-top:1.5px solid #ffefa6;border-left:2px solid #ffefa6"></div>
<div class="a" style="left:354px;top:229px;width:357px;height:33px;background:#fff0a6"></div>
<svg class="a" style="left:354px;top:199px" width="358" height="70" viewBox="354 199 358 70">
<defs><linearGradient id="gFold" x1="0" y1="0" x2="0" y2="1"><stop offset="0" stop-color="#fffbe0"/><stop offset="0.5" stop-color="#fff2a0"/><stop offset="1" stop-color="#f0d050"/></linearGradient>
<linearGradient id="gFoldB" x1="0" y1="0" x2="0" y2="1"><stop offset="0" stop-color="#fffef0"/><stop offset="1" stop-color="#f4e080"/></linearGradient></defs>
<path d="M360 209.8 L370.4 209.8 L365.2 220.7 Z" fill="#666"/>
<g id="fold">
<path d="M378.6 223 L378.6 207.5 Q378.6 205.6 380.5 205.6 L386.5 205.6 L389 208.4 L395.5 208.4 Q397.5 208.4 397.5 210.4 L397.5 213" fill="url(#gFoldB)" stroke="#c8961c" stroke-width="1.2"/>
<rect x="381.5" y="213" width="20" height="12" rx="1.5" fill="#8a7040" opacity="0.35"/>
<rect x="380.6" y="212" width="20" height="11.5" rx="1.5" fill="url(#gFold)" stroke="#c08818" stroke-width="1.3"/>
<line x1="383" y1="214.5" x2="398" y2="214.5" stroke="#fffbe8" stroke-width="1"/>
</g>
<use href="#fold" x="24" y="31.6"/>
</svg>
<div class="a" style="left:407px;top:204.5px;font-size:18px;line-height:24px;color:#111;white-space:nowrap;letter-spacing:0.2px"><span style="font-family:'Liberation Serif',serif">BOM</span>总成与关键子物料配置分类</div>
<div class="a" style="left:431.5px;top:236px;font-size:18px;line-height:24px;color:#1a1aff;white-space:nowrap">未分类</div>

</body></html>
